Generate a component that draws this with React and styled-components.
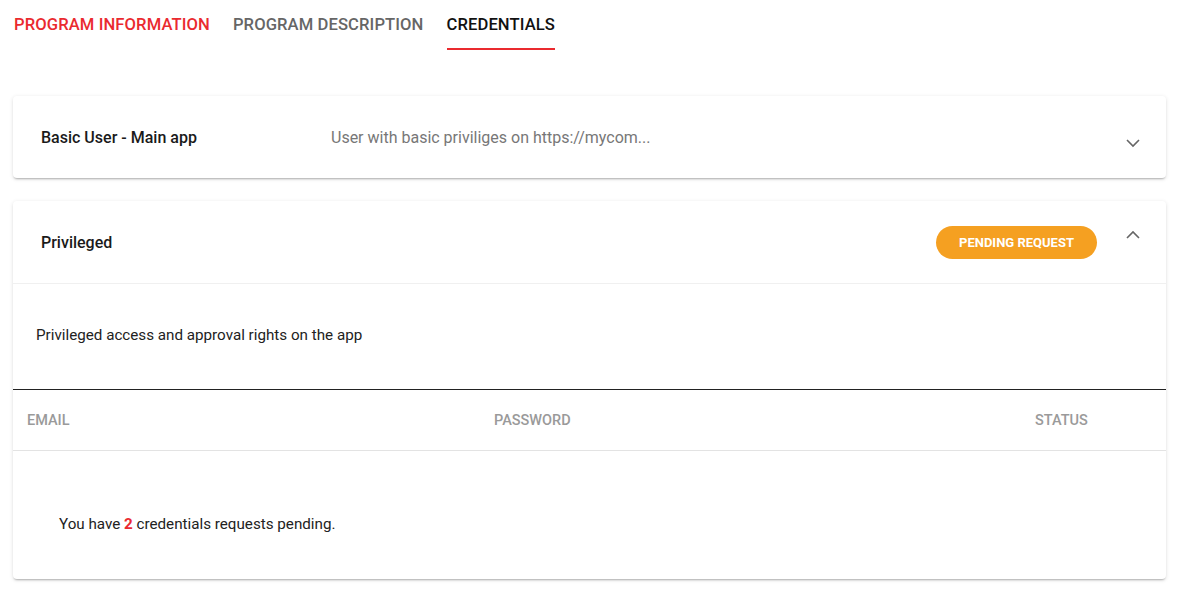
import React from 'react';
import styled, {createGlobalStyle} from 'styled-components';

const GlobalStyle = createGlobalStyle`
    body {
        margin: 0;
        background: #fff;
        font-family: Roboto, "Liberation Sans", sans-serif;
        color: #222;
    }
`;

const Page = styled.div`
    padding: 0 17px 0 13px;
`;

const Tabs = styled.nav`
    display: flex;
    gap: 23px;
    padding-left: 1px;
    margin-bottom: 46px;
`;

const Tab = styled.div`
    font-size: 16.6px;
    font-weight: 500;
    text-transform: uppercase;
    letter-spacing: 0.1px;
    padding: 15px 0 14px;
    color: ${p => p.$color};
    border-bottom: 2px solid ${p => (p.$active ? '#ea2a2f' : 'transparent')};
`;

const Card = styled.section`
    background: #fff;
    border-radius: 4px;
    box-shadow: 0 2px 2px -1px rgba(0, 0, 0, 0.25), 0 1px 4px rgba(0, 0, 0, 0.12);
    margin-bottom: 23px;
    overflow: hidden;
`;

const Header = styled.div`
    display: flex;
    align-items: center;
    height: 82px;
    padding: 0 25px 0 28px;
    border-bottom: ${p => (p.$open ? '1px solid #f0f0f0' : 'none')};
`;

const Title = styled.div`
    width: 290px;
    font-size: 16px;
    font-weight: 500;
    color: #1a1a1a;
`;

const Summary = styled.div`
    flex: 1;
    font-size: 16px;
    color: #777;
`;

const Badge = styled.span`
    display: inline-flex;
    align-items: center;
    justify-content: center;
    width: 161px;
    height: 33px;
    border-radius: 17px;
    background: #f5a021;
    color: #fff;
    font-size: 13px;
    font-weight: 700;
    text-transform: uppercase;
    margin-right: 28px;
`;

const Chevron = styled.svg`
    width: 16px;
    height: 16px;
    transform: translateY(${p => (p.$open ? '-7px' : '6px')});
`;

const Description = styled.p`
    margin: 0;
    padding: 42px 23px 0;
    height: 63px;
    font-size: 15.2px;
    color: #222;
    border-bottom: 1px solid #222;
`;

const TableHead = styled.div`
    display: grid;
    grid-template-columns: 467px 1fr 117px;
    align-items: center;
    height: 60px;
    padding: 0 14px;
    border-bottom: 1px solid #e3e3e3;
`;

const HeadCell = styled.div`
    font-size: 14.5px;
    font-weight: 500;
    color: #9a9a9a;
    text-transform: uppercase;
`;

const Message = styled.div`
    padding: 64px 46px 0;
    height: 64px;
    font-size: 15.2px;
    color: #222;
`;

const Count = styled.strong`
    color: #ea2a2f;
    font-weight: 700;
`;

function ChevronIcon({open}) {
    return (
        <Chevron $open={open} viewBox="0 0 16 16">
            <polyline
                points={open ? '2,11 8,5 14,11' : '2,5 8,11 14,5'}
                fill="none"
                stroke="#666"
                strokeWidth="1.6"
            />
        </Chevron>
    );
}

function App() {
    return (
        <Page>
            <GlobalStyle />
            <Tabs>
                <Tab $color="#ea2a2f">Program Information</Tab>
                <Tab $color="#666">Program Description</Tab>
                <Tab $color="#111" $active>Credentials</Tab>
            </Tabs>

            <Card>
                <Header>
                    <Title>Basic User - Main app</Title>
                    <Summary>User with basic priviliges on https://mycom...</Summary>
                    <ChevronIcon />
                </Header>
            </Card>

            <Card>
                <Header $open>
                    <Title>Privileged</Title>
                    <Summary />
                    <Badge>Pending request</Badge>
                    <ChevronIcon open />
                </Header>
                <Description>Privileged access and approval rights on the app</Description>
                <TableHead>
                    <HeadCell>Email</HeadCell>
                    <HeadCell>Password</HeadCell>
                    <HeadCell>Status</HeadCell>
                </TableHead>
                <Message>
                    You have <Count>2</Count> credentials requests pending.
                </Message>
            </Card>
        </Page>
    );
}

export default App;
